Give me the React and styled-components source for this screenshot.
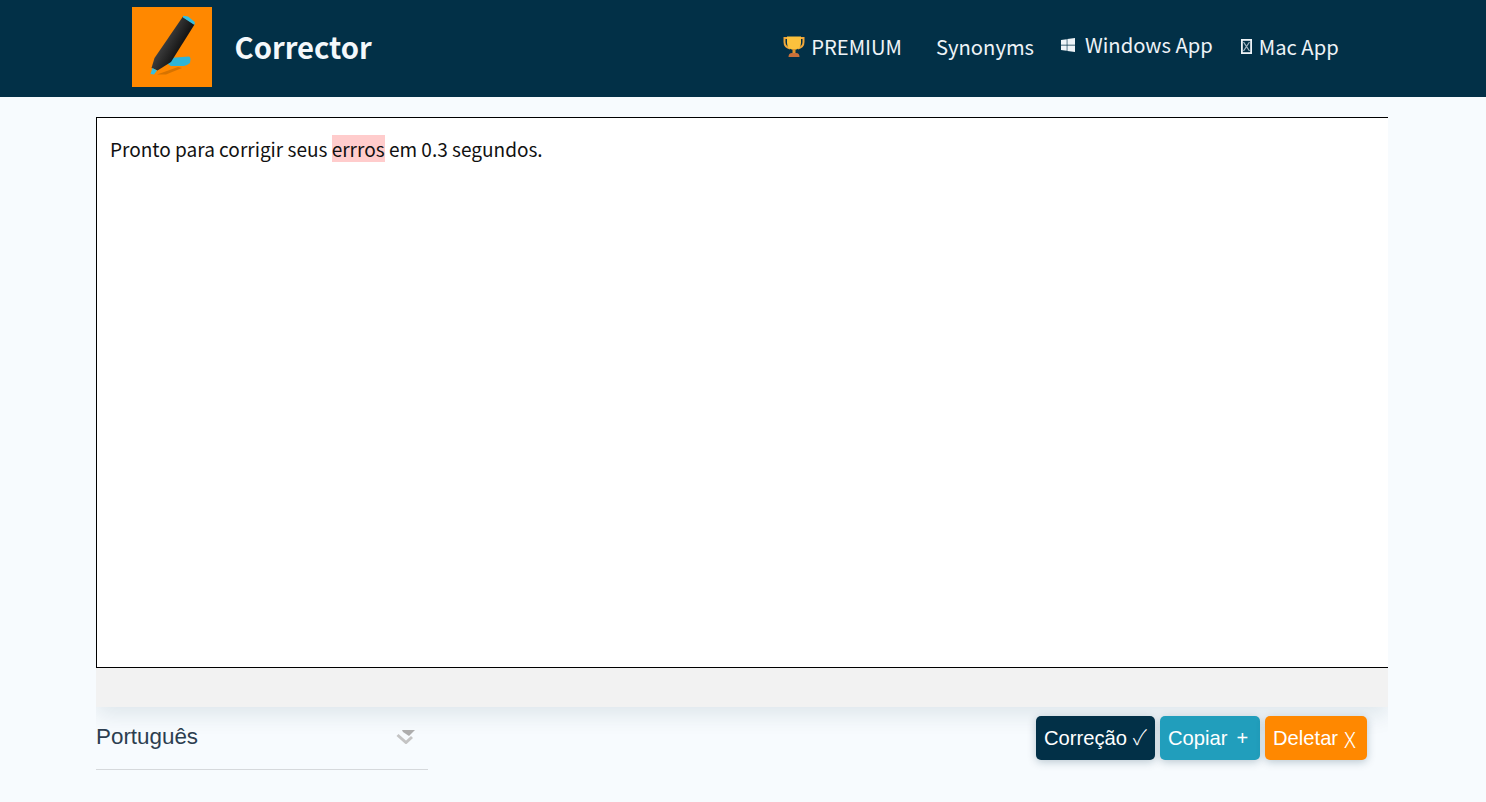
import React from 'react';
import styled, { createGlobalStyle } from 'styled-components';
import { FaWindows } from 'react-icons/fa';

const GlobalStyle = createGlobalStyle`
  html, body {
    margin: 0;
    padding: 0;
    background: #f7fbfe;
  }
  body {
    font-family: "Noto Sans CJK SC", "Noto Sans", sans-serif;
  }
`;

const Header = styled.header`
  height: 97px;
  background: #023047;
  display: flex;
  align-items: center;
  padding: 0 0 3px 132px;
  box-sizing: border-box;
`;

const LogoBox = styled.div`
  width: 80px;
  height: 80px;
  flex: none;
  background: #ff8800;
`;

const Title = styled.h1`
  margin: 0 0 3px 22.6px;
  font-size: 29.2px;
  font-weight: 700;
  color: #f4f8fb;
`;

const Nav = styled.nav`
  display: flex;
  align-items: center;
  margin: 0 0 1px 410.4px;
`;

const NavLink = styled.a`
  display: flex;
  align-items: center;
  gap: ${(p) => p.$gap || 0}px;
  margin-right: ${(p) => p.$right || 0}px;
  margin-top: ${(p) => p.$lift || 0}px;
  font-size: 20.2px;
  color: #eef3f7;
  white-space: nowrap;
`;

const Workspace = styled.main`
  width: 1292px;
  margin: 20px 0 0 96px;
  overflow: hidden;
`;

const Editor = styled.div`
  position: relative;
  z-index: 1;
  width: 1400px;
  height: 551px;
  box-sizing: border-box;
  border: 1px solid #000;
  background: #fff;
  padding: 16px 13px;
  font-size: 19.05px;
  line-height: 30px;
  color: #111;
`;

const Mark = styled.span`
  background: #ffcccc;
`;

const StatusBar = styled.div`
  height: 39px;
  background: #f2f2f2;
  box-shadow: 0 8px 22px rgba(2, 48, 71, 0.1);
`;

const Toolbar = styled.div`
  display: flex;
  justify-content: space-between;
  align-items: flex-start;
  height: 95px;
  padding-right: 21px;
`;

const LangSelect = styled.div`
  width: 332px;
  height: 63px;
  box-sizing: border-box;
  border-bottom: 1px solid #d6d9dc;
  display: flex;
  align-items: center;
  justify-content: space-between;
  padding: 0 12px 2px 0;
  font-family: "Liberation Sans", Arial, sans-serif;
  font-size: 22.4px;
  color: #2c3e50;
`;

const Buttons = styled.div`
  display: flex;
  gap: 5px;
  margin-top: 9px;
`;

const Button = styled.button`
  display: flex;
  align-items: center;
  width: ${(p) => p.$width}px;
  height: 44px;
  padding: 0 0 0 8px;
  box-sizing: border-box;
  border: 0;
  border-radius: 5px;
  background: ${(p) => p.$bg};
  color: #fff;
  font-family: "Liberation Sans", Arial, sans-serif;
  font-size: 20.2px;
  box-shadow: 0 2px 8px rgba(2, 48, 71, 0.25);
  white-space: nowrap;
`;

const Sign = styled.span`
  margin-left: ${(p) => p.$left}px;
  margin-bottom: ${(p) => p.$raise || 0}px;
  font-family: ${(p) => (p.$thin ? '"Noto Sans CJK SC", sans-serif' : 'inherit')};
  font-weight: ${(p) => (p.$thin ? 300 : 400)};
  font-size: ${(p) => p.$size}px;
  line-height: 1;
`;

const Logo = () => (
  <svg width="80" height="80" viewBox="0 0 80 80">
    <defs>
      <linearGradient id="body" x1="0.1" y1="0.3" x2="0.6" y2="0.65">
        <stop offset="0" stopColor="#6a6a6a" />
        <stop offset="0.45" stopColor="#3a3a3a" />
        <stop offset="1" stopColor="#161616" />
      </linearGradient>
    </defs>
    <path d="M25 67.5 L46 60 L50 61 L34 67.5 Z" fill="#b56200" opacity="0.55" />
    <path d="M37 51 L57 49.5 Q58.5 50 58.5 52 L58 56 Q55 58.5 52 59 L39 59 L34 56 Z" fill="#2fb5d6" />
    <path d="M50.8 9.7 L62.5 17.5 L39 55 L25.5 63.5 L19.5 61 L22.5 51 Z" fill="url(#body)" />
    <path d="M51 8.7 L56 9.5 L62.8 15 L62.5 18 L51 10.5 Z" fill="#36bfe0" />
    <path d="M20.5 61 L25 63.5 L22 67.5 L18.5 67 Z" fill="#36bfe0" />
  </svg>
);

const Trophy = () => (
  <svg width="24" height="24" viewBox="0 0 24 24">
    <path d="M6 3 H2.5 V7 Q2.5 12 8 13.5 M18 3 H21.5 V7 Q21.5 12 16 13.5" fill="none" stroke="#f0a63a" strokeWidth="2" />
    <path d="M5 1.5 H19 V8 Q19 14 12 15 Q5 14 5 8 Z" fill="#fcc13d" />
    <rect x="10.5" y="14" width="3" height="4" fill="#e0942c" />
    <path d="M6.5 22 Q6.5 18 10 18 H14 Q17.5 18 17.5 22 Z" fill="#c9703a" />
  </svg>
);

const MissingGlyph = () => (
  <svg width="11" height="15" viewBox="0 0 11 15" style={{ marginRight: 7 }}>
    <rect x="0.9" y="0.9" width="9.2" height="13.2" fill="none" stroke="#eef3f7" strokeWidth="1.8" />
    <path d="M2.5 3 L8.5 12 M8.5 3 L2.5 12" stroke="#9fb2bf" strokeWidth="1.3" />
  </svg>
);

const Arrow = () => (
  <svg width="20" height="14" viewBox="0 0 20 14">
    <path d="M6 0 H19 L13 6 L7 2 Z" fill="#adadad" />
    <path d="M1.5 5 L10 12.5 L16 7" fill="none" stroke="#c4c4c4" strokeWidth="3" />
  </svg>
);

export default function App() {
  return (
    <>
      <GlobalStyle />
      <Header>
        <LogoBox>
          <Logo />
        </LogoBox>
        <Title>Corrector</Title>
        <Nav>
          <NavLink $gap={5} $right={34}>
            <Trophy />
            PREMIUM
          </NavLink>
          <NavLink $right={26}>Synonyms</NavLink>
          <NavLink $gap={9} $right={28} $lift={-4}>
            <FaWindows size={16} />
            Windows App
          </NavLink>
          <NavLink>
            <MissingGlyph />
            Mac App
          </NavLink>
        </Nav>
      </Header>
      <Workspace>
        <Editor>
          Pronto para corrigir seus <Mark>errros</Mark> em 0.3 segundos.
        </Editor>
        <StatusBar />
        <Toolbar>
          <LangSelect>
            Português
            <Arrow />
          </LangSelect>
          <Buttons>
            <Button $width={119} $bg="#023047">Correção<Sign $left={6} $size={21} $raise={4} $thin>✓</Sign></Button>
            <Button $width={100} $bg="#219ebc">Copiar<Sign $left={9} $size={20}>+</Sign></Button>
            <Button $width={102} $bg="#ff8800">Deletar<Sign $left={6} $size={22} $thin>X</Sign></Button>
          </Buttons>
        </Toolbar>
      </Workspace>
    </>
  );
}
